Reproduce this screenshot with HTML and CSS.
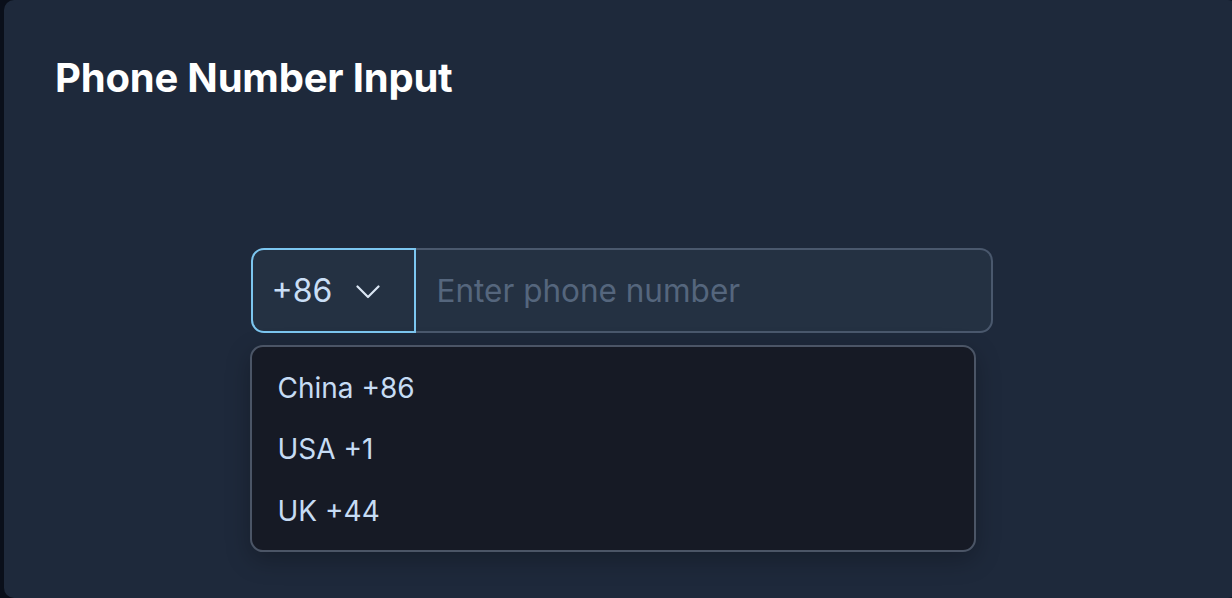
FILE: index.html
```html
<!DOCTYPE html>
<html lang="en">
<head>
<meta charset="utf-8">
<title>Phone Number Input</title>
<link rel="stylesheet" href="styles.css">
</head>
<body>
<div class="card">
  <h1 class="title">Phone Number Input</h1>
  <div class="field">
    <div class="row">
      <button class="code" type="button">
        <span class="code-text">+86</span>
        <svg class="chev" width="24" height="14" viewBox="0 0 24 14" fill="none" stroke="currentColor" stroke-width="2.2" stroke-linecap="round" stroke-linejoin="round"><path d="M1.5 1.5l10.5 10.5 10.5-10.5"/></svg>
      </button>
      <input class="phone" type="text" placeholder="Enter phone number">
    </div>
    <ul class="menu">
      <li class="item">China +86</li>
      <li class="item">USA +1</li>
      <li class="item">UK +44</li>
    </ul>
  </div>
</div>
</body>
</html>
```

FILE: styles.css
```css
html, body {
  margin: 0;
  padding: 0;
  background: #0a0f1a;
  overflow: hidden;
}
body {
  font-family: Inter, "Noto Sans", "Liberation Sans", sans-serif;
  width: 1232px;
  height: 598px;
}
.card {
  margin-left: 4px;
  width: 1234px;
  height: 598px;
  box-sizing: border-box;
  background: #1e293b;
  border-radius: 10px;
  padding: 54px 51px 0;
}
.title {
  margin: 0;
  font-size: 40px;
  line-height: 48px;
  font-weight: 700;
  color: #ffffff;
  letter-spacing: -0.2px;
}
.field {
  position: relative;
  width: 742px;
  margin: 146px auto 0;
  padding-left: 1px;
}
.row {
  display: flex;
  height: 85px;
}
.code {
  width: 165px;
  height: 85px;
  box-sizing: border-box;
  display: flex;
  align-items: center;
  gap: 24px;
  padding: 0 0 0 19px;
  background: #243142;
  border: 2px solid #7cc6f0;
  border-radius: 13px 0 0 13px;
  color: #c9def5;
  font-family: inherit;
  font-size: 32px;
  cursor: pointer;
}
.chev {
  color: #dbe6f3;
  margin-top: 2px;
}
.phone {
  flex: 1;
  height: 85px;
  box-sizing: border-box;
  background: #243142;
  border: 2px solid #4a586d;
  border-left: none;
  border-radius: 0 13px 13px 0;
  padding: 0 0 0 21px;
  font-family: inherit;
  font-size: 31.5px;
  color: #c9def5;
  outline: none;
}
.phone::placeholder {
  color: #55667d;
}
.menu {
  position: absolute;
  left: 0;
  top: 97px;
  width: 726px;
  box-sizing: border-box;
  margin: 0;
  list-style: none;
  padding: 10px 0 8px;
  background: #161a25;
  border: 2px solid #4b5566;
  border-radius: 13px;
  box-shadow: 0 8px 24px rgba(0, 0, 0, 0.25);
}
.item {
  height: 61.5px;
  display: flex;
  align-items: center;
  padding-left: 26px;
  font-size: 28px;
  color: #c6dcf4;
}
```
